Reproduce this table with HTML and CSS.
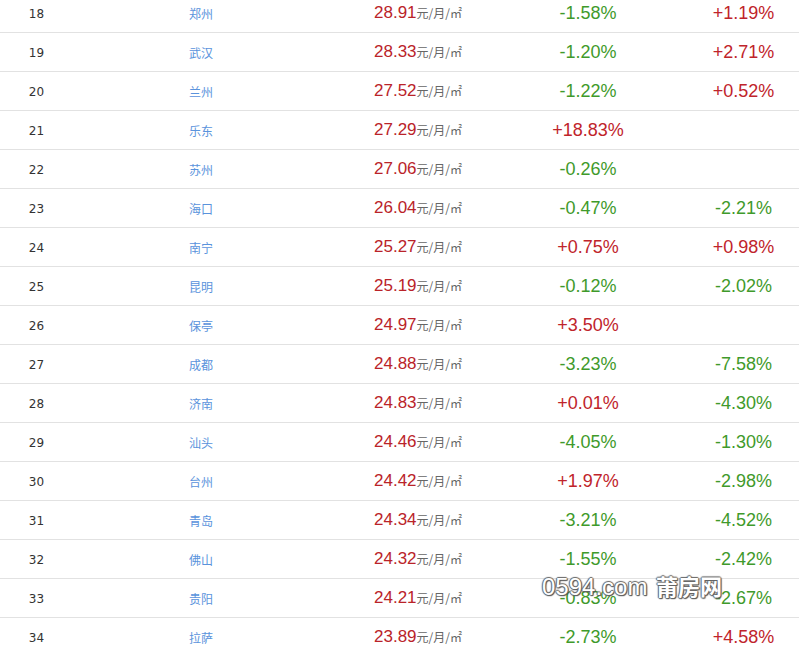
FILE: index.html
```html
<!DOCTYPE html>
<html lang="zh-CN">
<head>
<meta charset="utf-8">
<title>租金排行</title>
<link rel="stylesheet" href="styles.css">
</head>
<body>
<div class="page">
  <div class="table">
    <div class="row"><span class="idx">18</span><span class="city">郑州</span><span class="price"><b>28.91</b><i>元/月/㎡</i></span><span class="pct dn">-1.58%</span><span class="pct yoy up">+1.19%</span></div>
    <div class="row"><span class="idx">19</span><span class="city">武汉</span><span class="price"><b>28.33</b><i>元/月/㎡</i></span><span class="pct dn">-1.20%</span><span class="pct yoy up">+2.71%</span></div>
    <div class="row"><span class="idx">20</span><span class="city">兰州</span><span class="price"><b>27.52</b><i>元/月/㎡</i></span><span class="pct dn">-1.22%</span><span class="pct yoy up">+0.52%</span></div>
    <div class="row"><span class="idx">21</span><span class="city">乐东</span><span class="price"><b>27.29</b><i>元/月/㎡</i></span><span class="pct up">+18.83%</span><span class="pct yoy"></span></div>
    <div class="row"><span class="idx">22</span><span class="city">苏州</span><span class="price"><b>27.06</b><i>元/月/㎡</i></span><span class="pct dn">-0.26%</span><span class="pct yoy"></span></div>
    <div class="row"><span class="idx">23</span><span class="city">海口</span><span class="price"><b>26.04</b><i>元/月/㎡</i></span><span class="pct dn">-0.47%</span><span class="pct yoy dn">-2.21%</span></div>
    <div class="row"><span class="idx">24</span><span class="city">南宁</span><span class="price"><b>25.27</b><i>元/月/㎡</i></span><span class="pct up">+0.75%</span><span class="pct yoy up">+0.98%</span></div>
    <div class="row"><span class="idx">25</span><span class="city">昆明</span><span class="price"><b>25.19</b><i>元/月/㎡</i></span><span class="pct dn">-0.12%</span><span class="pct yoy dn">-2.02%</span></div>
    <div class="row"><span class="idx">26</span><span class="city">保亭</span><span class="price"><b>24.97</b><i>元/月/㎡</i></span><span class="pct up">+3.50%</span><span class="pct yoy"></span></div>
    <div class="row"><span class="idx">27</span><span class="city">成都</span><span class="price"><b>24.88</b><i>元/月/㎡</i></span><span class="pct dn">-3.23%</span><span class="pct yoy dn">-7.58%</span></div>
    <div class="row"><span class="idx">28</span><span class="city">济南</span><span class="price"><b>24.83</b><i>元/月/㎡</i></span><span class="pct up">+0.01%</span><span class="pct yoy dn">-4.30%</span></div>
    <div class="row"><span class="idx">29</span><span class="city">汕头</span><span class="price"><b>24.46</b><i>元/月/㎡</i></span><span class="pct dn">-4.05%</span><span class="pct yoy dn">-1.30%</span></div>
    <div class="row"><span class="idx">30</span><span class="city">台州</span><span class="price"><b>24.42</b><i>元/月/㎡</i></span><span class="pct up">+1.97%</span><span class="pct yoy dn">-2.98%</span></div>
    <div class="row"><span class="idx">31</span><span class="city">青岛</span><span class="price"><b>24.34</b><i>元/月/㎡</i></span><span class="pct dn">-3.21%</span><span class="pct yoy dn">-4.52%</span></div>
    <div class="row"><span class="idx">32</span><span class="city">佛山</span><span class="price"><b>24.32</b><i>元/月/㎡</i></span><span class="pct dn">-1.55%</span><span class="pct yoy dn">-2.42%</span></div>
    <div class="row"><span class="idx">33</span><span class="city">贵阳</span><span class="price"><b>24.21</b><i>元/月/㎡</i></span><span class="pct dn">-0.83%</span><span class="pct yoy dn">-2.67%</span></div>
    <div class="row"><span class="idx">34</span><span class="city">拉萨</span><span class="price"><b>23.89</b><i>元/月/㎡</i></span><span class="pct dn">-2.73%</span><span class="pct yoy up">+4.58%</span></div>
  </div>
  <div class="watermark">0594.com <span class="wm-cn">莆房网</span></div>
</div>
</body>
</html>
```

FILE: styles.css
```css
html, body {
  margin: 0;
  padding: 0;
  background: #fff;
}
body {
  width: 799px;
  height: 653px;
  overflow: hidden;
  font-family: "Liberation Sans", "Noto Sans CJK SC", sans-serif;
}
.page {
  position: relative;
  width: 799px;
  height: 653px;
  overflow: hidden;
}
.table {
  margin-top: -6px;
}
.row {
  display: grid;
  grid-template-columns: 73px 256px 178px 162px 130px;
  align-items: center;
  height: 38px;
  border-bottom: 1px solid #e2e2e2;
}
.idx {
  text-align: center;
  font-family: "DejaVu Sans", sans-serif;
  font-size: 12px;
  color: #333;
  padding-top: 2px;
}
.city {
  text-align: center;
  font-family: "Noto Sans CJK SC", sans-serif;
  font-size: 12px;
  color: #5a93dc;
  padding-top: 1px;
}
.price {
  text-align: center;
  white-space: nowrap;
}
.price b {
  font-weight: normal;
  font-size: 17px;
  color: #ba2329;
}
.price i {
  font-style: normal;
  font-family: "Noto Sans CJK SC", sans-serif;
  font-size: 12px;
  color: #666;
}
.pct {
  text-align: center;
  font-size: 18px;
  padding-top: 1px;
}
.yoy {
  padding-left: 19px;
}
.up {
  color: #bf242b;
}
.dn {
  color: #3f9a2b;
}
.watermark {
  position: absolute;
  left: 542px;
  top: 573px;
  line-height: 24px;
  font-size: 24px;
  color: #fff;
  white-space: nowrap;
  text-shadow: 1px 0 1px #666, -1px 0 1px #666, 0 1px 1px #666, 0 -1px 1px #666, 1px 1px 1px #444;
}
.wm-cn {
  font-family: "Noto Sans CJK SC", sans-serif;
  font-weight: bold;
  font-size: 22px;
  margin-left: 2px;
}
```
